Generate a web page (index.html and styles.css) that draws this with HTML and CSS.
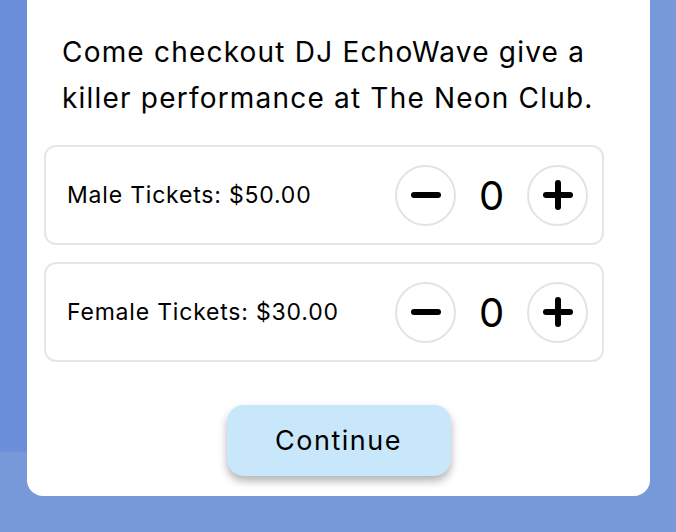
FILE: index.html
```html
<!DOCTYPE html>
<html>
<head>
<meta charset="utf-8">
<link rel="stylesheet" href="styles.css">
</head>
<body>
<div class="card">
  <p class="intro">Come checkout DJ EchoWave give a killer performance at The Neon Club.</p>
  <div class="rows">
    <div class="row">
      <span class="label">Male Tickets: $50.00</span>
      <div class="counter">
        <button class="circle" aria-label="decrease"><svg width="32" height="32" viewBox="0 0 32 32"><line x1="4" y1="16" x2="28" y2="16" stroke="#000" stroke-width="6" stroke-linecap="round"/></svg></button>
        <span class="count">0</span>
        <button class="circle" aria-label="increase"><svg width="32" height="32" viewBox="0 0 32 32"><line x1="4" y1="16" x2="28" y2="16" stroke="#000" stroke-width="6" stroke-linecap="round"/><line x1="16" y1="4" x2="16" y2="28" stroke="#000" stroke-width="6" stroke-linecap="round"/></svg></button>
      </div>
    </div>
    <div class="row">
      <span class="label">Female Tickets: $30.00</span>
      <div class="counter">
        <button class="circle" aria-label="decrease"><svg width="32" height="32" viewBox="0 0 32 32"><line x1="4" y1="16" x2="28" y2="16" stroke="#000" stroke-width="6" stroke-linecap="round"/></svg></button>
        <span class="count">0</span>
        <button class="circle" aria-label="increase"><svg width="32" height="32" viewBox="0 0 32 32"><line x1="4" y1="16" x2="28" y2="16" stroke="#000" stroke-width="6" stroke-linecap="round"/><line x1="16" y1="4" x2="16" y2="28" stroke="#000" stroke-width="6" stroke-linecap="round"/></svg></button>
      </div>
    </div>
  </div>
  <div class="actions">
    <button class="continue">Continue</button>
  </div>
</div>
</body>
</html>
```
FILE: styles.css
```css
html, body {
  margin: 0;
  padding: 0;
}
body {
  width: 676px;
  height: 532px;
  overflow: hidden;
  font-family: "Inter", "Liberation Sans", sans-serif;
  color: #000;
  background:
    linear-gradient(#6b8fd8, #6b8fd8) 0 0 / 40px 452px no-repeat,
    #7899d9;
}
.card {
  margin-left: 27px;
  width: 623px;
  box-sizing: border-box;
  padding: 0 17px 20px;
  background: #fff;
  border-radius: 0 0 16px 16px;
}
.intro {
  margin: 0;
  padding: 29px 0 24px 18px;
  font-size: 28px;
  line-height: 46px;
  letter-spacing: 1.2px;
  font-weight: 400;
}
.rows {
  display: flex;
  flex-direction: column;
  gap: 17px;
  margin-right: 29px;
}
.row {
  height: 100px;
  box-sizing: border-box;
  border: 2px solid #e6e6e6;
  border-radius: 12px;
  display: flex;
  align-items: center;
  justify-content: space-between;
  padding: 0 14px 0 21px;
}
.label {
  font-size: 23px;
  letter-spacing: 0.8px;
}
.counter {
  display: flex;
  align-items: center;
}
.circle {
  width: 61px;
  height: 61px;
  border-radius: 50%;
  border: 2px solid #e3e3e3;
  background: #fff;
  padding: 0;
  display: flex;
  align-items: center;
  justify-content: center;
}
.count {
  width: 71px;
  text-align: center;
  font-size: 40px;
  font-weight: 400;
}
.actions {
  display: flex;
  justify-content: center;
  padding-top: 43px;
}
.continue {
  width: 224px;
  height: 71px;
  border: none;
  border-radius: 17px;
  background: #c8e7fb;
  box-shadow: 0 5px 8px rgba(0, 0, 0, 0.3);
  font-family: "Inter", "Liberation Sans", sans-serif;
  font-size: 27px;
  letter-spacing: 1.5px;
  color: #000;
}
```
